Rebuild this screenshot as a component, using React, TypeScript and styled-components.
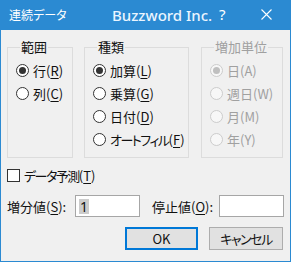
import styled, { createGlobalStyle } from 'styled-components'

const GlobalStyle = createGlobalStyle`
  html, body {
    margin: 0;
    padding: 0;
    background: #f0f0f0;
  }
  body {
    font-family: "Noto Sans CJK JP", "Noto Sans", sans-serif;
    font-feature-settings: "palt";
  }
`

type RadioItem = {
  label: string
  key?: string
  checked?: boolean
  tight?: boolean
}

const rangeItems: RadioItem[] = [
  { label: '行', key: 'R', checked: true },
  { label: '列', key: 'C' },
]

const typeItems: RadioItem[] = [
  { label: '加算', key: 'L', checked: true },
  { label: '乗算', key: 'G' },
  { label: '日付', key: 'D' },
  { label: 'オートフィル', key: 'F', tight: true },
]

const unitItems: RadioItem[] = [
  { label: '日(A)', checked: true },
  { label: '週日(W)' },
  { label: '月(M)' },
  { label: '年(Y)' },
]

function Radio({ item, disabled }: { item: RadioItem; disabled?: boolean }) {
  return (
    <RadioRow $disabled={disabled}>
      <Circle $disabled={disabled}>{item.checked && <Dot $disabled={disabled} />}</Circle>
      <span>
        <Kana $tight={item.tight}>{item.label}</Kana>
        {item.key && (
          <>
            (<u>{item.key}</u>)
          </>
        )}
      </span>
    </RadioRow>
  )
}

function App() {
  return (
    <>
      <GlobalStyle />
      <Window>
        <TitleBar>
          <Title>連続データ</Title>
          <Brand>Buzzword Inc.</Brand>
          <Help>?</Help>
          <Close>
            <svg width="11" height="11" viewBox="0 0 11 11">
              <path d="M0.5 0.5 L10.5 10.5 M10.5 0.5 L0.5 10.5" stroke="#fff" strokeWidth="1.1" />
            </svg>
          </Close>
        </TitleBar>

        <Body>
          <Groups>
            <Group $width={66}>
              <Legend>範囲</Legend>
              {rangeItems.map((item) => (
                <Radio key={item.label} item={item} />
              ))}
            </Group>
            <Group $width={105}>
              <Legend>種類</Legend>
              {typeItems.map((item) => (
                <Radio key={item.label} item={item} />
              ))}
            </Group>
            <Group $width={82} $disabled>
              <Legend>増加単位</Legend>
              {unitItems.map((item) => (
                <Radio key={item.label} item={item} disabled />
              ))}
            </Group>
          </Groups>

          <CheckRow>
            <CheckBox />
            <span>
              <Kana $tight>データ予測</Kana>(<u>T</u>)
            </span>
          </CheckRow>

          <FieldRow>
            <FieldLabel $width={68}>
              増分値(<u>S</u>):
            </FieldLabel>
            <TextBox>
              <Selected>1</Selected>
            </TextBox>
            <FieldLabel $width={67} $offset={12}>
              停止値(<u>O</u>):
            </FieldLabel>
            <TextBox />
          </FieldRow>

          <ButtonRow>
            <Button $primary>OK</Button>
            <Button>
              <Kana $tight>キャンセル</Kana>
            </Button>
          </ButtonRow>
        </Body>
      </Window>
    </>
  )
}

const Window = styled.div`
  width: 291px;
  height: 262px;
  box-sizing: border-box;
  display: flex;
  flex-direction: column;
  background: #f0f0f0;
  border: 1px solid #2b8ad2;
  border-top: 0;
`

const TitleBar = styled.div`
  height: 30px;
  flex: none;
  margin: 0 -1px;
  background: #2b8ad2;
  color: #fff;
  display: flex;
  align-items: center;
  padding: 0 0 0 9px;

  & > * {
    flex: none;
  }
`

const Title = styled.div`
  font-size: 12px;
  width: 103px;
  margin-top: -1px;
`

const Brand = styled.div`
  font-family: "Noto Sans", sans-serif;
  font-size: 15px;
  font-weight: 500;
  color: #eaf5ff;
  width: 107px;
  white-space: nowrap;
  margin-top: -1px;
`

const Help = styled.div`
  font-family: "Noto Sans", sans-serif;
  font-size: 15px;
  width: 42px;
  margin-top: -2px;
`

const Close = styled.div`
  display: flex;
  align-items: center;
  margin-top: -1px;
`

const Body = styled.div`
  flex: 1;
  display: flex;
  flex-direction: column;
  padding: 10px 6px 0 6px;
  font-size: 13px;
  color: #111;
`

const Kana = styled.span<{ $tight?: boolean }>`
  letter-spacing: ${(p) => (p.$tight ? '-1.5px' : '0')};
`

const Groups = styled.div`
  display: flex;
  height: 118px;
  gap: 11px;
`

const Group = styled.fieldset<{ $width: number; $disabled?: boolean }>`
  width: ${(p) => p.$width}px;
  box-sizing: border-box;
  margin: 0;
  padding: 5px 0 0 8px;
  border: 1px solid #dcdcdc;
  min-width: 0;
  display: flex;
  flex-direction: column;
  color: ${(p) => (p.$disabled ? '#a0a0a0' : '#111')};
  & + & + & {
    margin-left: 1px;
  }
`

const Legend = styled.legend`
  padding: 0 1px;
  margin-left: 4px;
  font-size: 13px;
  line-height: 14px;
`

const RadioRow = styled.div<{ $disabled?: boolean }>`
  height: 23px;
  display: flex;
  align-items: center;
  gap: 4px;
  white-space: nowrap;
  color: ${(p) => (p.$disabled ? '#a0a0a0' : '#111')};

  u {
    text-underline-offset: 2px;
  }
`

const Circle = styled.span<{ $disabled?: boolean }>`
  width: 13px;
  height: 13px;
  box-sizing: border-box;
  border-radius: 50%;
  border: 1px solid ${(p) => (p.$disabled ? '#cccccc' : '#333333')};
  background: ${(p) => (p.$disabled ? '#f7f7f7' : '#ffffff')};
  display: flex;
  align-items: center;
  justify-content: center;
  flex: none;
`

const Dot = styled.span<{ $disabled?: boolean }>`
  width: 7px;
  height: 7px;
  border-radius: 50%;
  background: ${(p) => (p.$disabled ? '#bfbfbf' : '#333333')};
`

const CheckRow = styled.div`
  margin-top: 11px;
  height: 13px;
  display: flex;
  align-items: center;
  gap: 4px;

  u {
    text-underline-offset: 2px;
  }
`

const CheckBox = styled.span`
  width: 13px;
  height: 13px;
  box-sizing: border-box;
  border: 1px solid #333333;
  background: #fff;
  flex: none;
`

const FieldRow = styled.div`
  margin-top: 13px;
  height: 22px;
  display: flex;
  align-items: center;

  u {
    text-underline-offset: 2px;
  }
`

const FieldLabel = styled.div<{ $width: number; $offset?: number }>`
  width: ${(p) => p.$width}px;
  margin-left: ${(p) => p.$offset ?? 0}px;
  white-space: nowrap;
  flex: none;
`

const TextBox = styled.div`
  width: 65px;
  height: 22px;
  box-sizing: border-box;
  border: 1px solid #a6a6a6;
  background: #fff;
  display: flex;
  align-items: center;
  padding-left: 3px;
  flex: none;
`

const Selected = styled.span`
  background: #cccccc;
  padding: 0 1px;
  line-height: 15px;
  font-family: "Noto Sans", sans-serif;
  font-size: 14px;
`

const ButtonRow = styled.div`
  margin-top: 10px;
  display: flex;
  justify-content: flex-end;
  gap: 11px;
  padding-right: 1px;
`

const Button = styled.button<{ $primary?: boolean }>`
  width: ${(p) => (p.$primary ? 73 : 74)}px;
  height: 23px;
  box-sizing: border-box;
  border: ${(p) => (p.$primary ? '2px solid #0078d7' : '1px solid #adadad')};
  background: #e1e1e1;
  font-family: "Noto Sans CJK JP", "Noto Sans", sans-serif;
  font-feature-settings: "palt";
  font-size: 13px;
  color: #111;
  padding: 0;
`

export default App
